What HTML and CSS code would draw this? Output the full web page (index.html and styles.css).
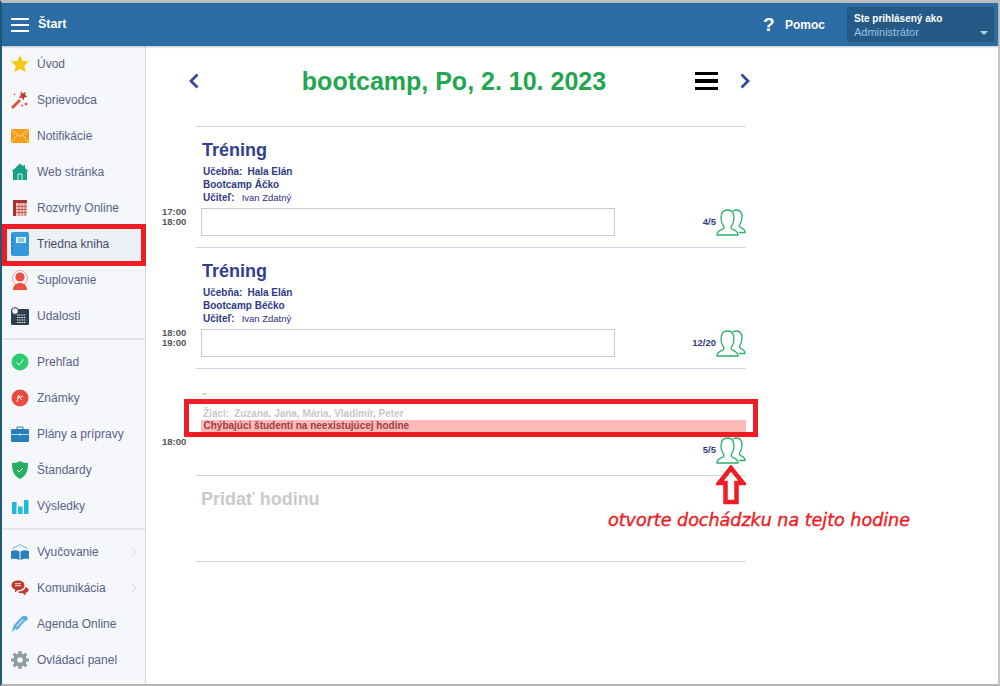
FILE: index.html
```html
<!DOCTYPE html>
<html lang="sk">
<head>
  <meta charset="UTF-8">
  <meta name="viewport" content="width=device-width, initial-scale=1">
  <title>Triedna kniha</title>
  <link rel="stylesheet" href="styles.css">
</head>
<body>
  <div class="window">
    <!-- Header -->
    <header class="topbar">
      <div class="menu-btn"><span></span><span></span><span></span></div>
      <div class="topbar-title">Štart</div>
      <div class="help"><span class="help-mark">?</span><span class="help-text">Pomoc</span></div>
      <div class="user-box">
        <div class="user-label">Ste prihlásený ako</div>
        <div class="user-name">Administrátor</div>
        <div class="user-caret"></div>
      </div>
    </header>

    <div class="layout">
      <!-- Sidebar -->
      <nav class="sidebar">
        <div class="nav-group">
          <div class="nav-item">
            <svg class="nav-icon" viewBox="0 0 18 18"><path fill="#f5c913" d="M9 0l2.600 6 6.400.6-4.800 4.200 1.400 6.400L9 13.900l-5.600 3.300 1.400-6.400L0 6.600 6.400 6z"/></svg>
            <span>Úvod</span>
          </div>
          <div class="nav-item">
            <svg class="nav-icon" viewBox="0 0 18 18"><path stroke="#e8483c" stroke-width="2.600" d="M1 17l8-8"/><path fill="#c0392b" d="M10 0l1.500 2.500L15 1l-.8 3 2.300 1.800-3 .5-1 3-1.800-2.500-3 .3 1.800-2.500z"/><path fill="#e8483c" d="M15 11l.7 1.300 1.300.7-1.300.7L15 15l-.7-1.300-1.300-.7 1.300-.7zM11 13l.5 1 1 .5-1 .5-.5 1-.5-1-1-.5 1-.5zM3.500 2l.4.900.9.400-.9.400-.4.900-.4-.9-.9-.4.900-.4z"/></svg>
            <span>Sprievodca</span>
          </div>
          <div class="nav-item">
            <svg class="nav-icon" viewBox="0 0 18 14"><rect width="18" height="14" fill="#f5a01b"/><path fill="none" stroke="#fbe3b5" stroke-width=".8" d="M0 .5l9 7 9-7M0 13.500l6.500-7.500M18 13.500L11.500 6"/></svg>
            <span>Notifikácie</span>
          </div>
          <div class="nav-item">
            <svg class="nav-icon" viewBox="0 0 18 18"><path fill="#16a085" d="M9 .5l3.500 3V2H14v3l3.500 3.500H16V17H2V8.500H.5z"/><path fill="none" stroke="#d5efe9" d="M7 17v-6h4v6"/></svg>
            <span>Web stránka</span>
          </div>
          <div class="nav-item">
            <svg class="nav-icon" viewBox="0 0 18 18"><rect x="2" y="1" width="14" height="16" fill="#f0c9c5"/><path fill="#a5362b" d="M2 1h14v3H2zM2 4h3v13H2z"/><path stroke="#c4574d" stroke-width=".9" d="M5 7.500h11M5 10.500h11M5 13.500h11M8 4v13M11 4v13M14 4v13"/></svg>
            <span>Rozvrhy Online</span>
          </div>
          <div class="nav-item nav-item-active">
            <svg class="nav-icon nav-icon-tall" viewBox="0 0 18 24"><rect width="18" height="24" rx="2" fill="#3498db"/><rect x="5" y="5" width="10" height="6" fill="#e3f1fb"/><path stroke="#3498db" d="M7 7h6M7 9h6"/><path stroke="#1f6fa8" d="M0 4h2M0 8h2M0 12h2M0 16h2M0 20h2"/></svg>
            <span>Triedna kniha</span>
          </div>
          <div class="nav-item">
            <svg class="nav-icon nav-icon-large" viewBox="0 0 18 20"><circle cx="9" cy="8" r="7.600" fill="none" stroke="#f0a79f"/><circle cx="9" cy="7" r="4.600" fill="#e8503f"/><path fill="#e8503f" d="M2 20c0-4.500 3-7 7-7s7 2.500 7 7z"/></svg>
            <span>Suplovanie</span>
          </div>
          <div class="nav-item">
            <svg class="nav-icon" viewBox="0 0 18 18"><rect y="2" width="18" height="16" rx="1" fill="#2c3e50"/><circle cx="4" cy="4" r="3.400" fill="#f4f6f9" stroke="#2c3e50"/><path stroke="#fff" stroke-width="1.200" stroke-dasharray="1.400 .8" d="M6 8h9M6 10.500h9M6 13h9M6 15.500h9"/></svg>
            <span>Udalosti</span>
          </div>
        </div>
        <div class="nav-group">
          <div class="nav-item">
            <svg class="nav-icon" viewBox="0 0 18 18"><circle cx="9" cy="9" r="8.500" fill="#2ecc71"/><path fill="none" stroke="#fff" d="M5.500 9.500l2.500 2.500 4.500-5.500"/></svg>
            <span>Prehľad</span>
          </div>
          <div class="nav-item">
            <svg class="nav-icon" viewBox="0 0 18 18"><circle cx="9" cy="9" r="8.500" fill="#e74c3c"/><path fill="none" stroke="#fff" stroke-width=".9" d="M6 13l1.500-7 3 5M7 9l5-2"/></svg>
            <span>Známky</span>
          </div>
          <div class="nav-item">
            <svg class="nav-icon" viewBox="0 0 18 16"><rect y="3" width="18" height="13" rx="1" fill="#2980b9"/><path fill="none" stroke="#2980b9" d="M6 3V1h6v2"/><path stroke="#d8eaf6" stroke-width=".8" d="M0 8.500h18"/><circle cx="9" cy="8.500" r="1" fill="#d8eaf6"/></svg>
            <span>Plány a prípravy</span>
          </div>
          <div class="nav-item">
            <svg class="nav-icon" viewBox="0 0 18 18"><path fill="#27ae60" d="M9 0c2.500 1.500 5 2 8 2 0 7-1 12.500-8 16C2 14.500 1 9 1 2c3 0 5.500-.5 8-2z"/><path fill="none" stroke="#fff" d="M6 9l2.200 2 3.800-4"/></svg>
            <span>Štandardy</span>
          </div>
          <div class="nav-item">
            <svg class="nav-icon" viewBox="0 0 18 18"><path fill="#1abbdc" d="M1 5h4.500v12H1zM7 9.500h4.500V17H7zM13 3h4.500v14H13z"/></svg>
            <span>Výsledky</span>
          </div>
        </div>
        <div class="nav-group">
          <div class="nav-item">
            <svg class="nav-icon" viewBox="0 0 18 16"><path fill="#2980b9" d="M0 7c3-1 6-1 8.500.5V16C6 14.500 3 14.500 0 15zM18 7c-3-1-6-1-8.500.5V16c2.500-1.500 5.500-1.500 8.500-1z"/><path fill="none" stroke="#7fb3d5" d="M1 5l8-4.500L17 5"/></svg>
            <span>Vyučovanie</span>
            <svg class="nav-more" viewBox="0 0 6 10"><path fill="none" stroke="#d3d7dc" d="M1 1l4 4-4 4"/></svg>
          </div>
          <div class="nav-item">
            <svg class="nav-icon" viewBox="0 0 18 17"><path fill="#c0392b" d="M7 1c3.800 0 6.500 1.800 6.500 4.700S10.800 10.500 7 10.500l-3 2.500v-3C1.500 9 .5 7.500.5 5.700.5 2.800 3.200 1 7 1z"/><path fill="#c0392b" d="M14.500 7.500c2 .5 3 1.500 3 3s-1 2.500-3 2.800V16l-3-2.500H8l-1-1.500c4 0 7-1.500 7.500-4.500z"/><path stroke="#fff" stroke-width=".9" d="M4 4.200h6M4 6.200h6"/></svg>
            <span>Komunikácia</span>
            <svg class="nav-more" viewBox="0 0 6 10"><path fill="none" stroke="#d3d7dc" d="M1 1l4 4-4 4"/></svg>
          </div>
          <div class="nav-item">
            <svg class="nav-icon" viewBox="0 0 18 18"><path fill="#5dade2" d="M0 18l3-8 8-8.500c2-1.500 6-.5 6 2.500L8 13.500z"/><path stroke="#f5f7fa" stroke-width="1.100" d="M5.500 11.500l6.500-7M9 12.500l5.500-6.500M0 18l5-4"/></svg>
            <span>Agenda Online</span>
          </div>
          <div class="nav-item">
            <svg class="nav-icon" viewBox="0 0 18 18"><circle cx="9" cy="9" r="4.800" fill="none" stroke="#8f9ea3" stroke-width="4"/><path stroke="#8f9ea3" stroke-width="3.200" d="M9 0v3.500M9 14.500V18M0 9h3.500M14.500 9H18M2.600 2.600l2.500 2.500M12.900 12.900l2.500 2.500M15.400 2.600l-2.500 2.500M5.100 12.900l-2.500 2.500"/></svg>
            <span>Ovládací panel</span>
          </div>
        </div>
      </nav>

      <!-- Content -->
      <main class="content">
        <div class="day-head">
          <svg class="day-arrow" viewBox="0 0 10 16"><path fill="none" stroke="#2f4c94" stroke-width="2.800" d="M8.500 1.500L2 8l6.500 6.500"/></svg>
          <h1 class="day-title">bootcamp, Po, 2. 10. 2023</h1>
          <div class="day-menu"><span></span><span></span><span></span></div>
          <svg class="day-arrow" viewBox="0 0 10 16"><path fill="none" stroke="#2f4c94" stroke-width="2.800" d="M1.500 1.500L8 8l-6.500 6.500"/></svg>
        </div>

        <section class="lesson">
          <div class="lesson-time">17:00<br>18:00</div>
          <div class="lesson-body">
            <h2 class="lesson-title">Tréning</h2>
            <div class="lesson-info">
              <div><span class="info-label">Učebňa:</span>Hala Elán</div>
              <div>Bootcamp Áčko</div>
              <div><span class="info-label">Učiteľ:</span><span class="info-thin">Ivan Zdatný</span></div>
            </div>
            <div class="lesson-foot">
              <div class="lesson-note"></div>
              <div class="lesson-count">4/5</div>
              <svg class="people" viewBox="0 0 30 27"><use href="#people-icon"/></svg>
            </div>
          </div>
        </section>

        <section class="lesson">
          <div class="lesson-time">18:00<br>19:00</div>
          <div class="lesson-body">
            <h2 class="lesson-title">Tréning</h2>
            <div class="lesson-info">
              <div><span class="info-label">Učebňa:</span>Hala Elán</div>
              <div>Bootcamp Béčko</div>
              <div><span class="info-label">Učiteľ:</span><span class="info-thin">Ivan Zdatný</span></div>
            </div>
            <div class="lesson-foot">
              <div class="lesson-note"></div>
              <div class="lesson-count">12/20</div>
              <svg class="people" viewBox="0 0 30 27"><use href="#people-icon"/></svg>
            </div>
          </div>
        </section>

        <section class="lesson lesson-ghost">
          <div class="lesson-time">18:00</div>
          <div class="lesson-body">
            <div class="ghost-dash">-</div>
            <div class="ghost-students"><span class="info-label">Žiaci:</span>Zuzana, Jana, Mária, Vladimír, Peter</div>
            <div class="ghost-warning">Chýbajúci študenti na neexistujúcej hodine</div>
            <div class="ghost-foot">
              <div class="lesson-count">5/5</div>
              <svg class="people" viewBox="0 0 30 27"><use href="#people-icon"/></svg>
            </div>
          </div>
        </section>

        <section class="lesson lesson-add">
          <div class="lesson-time"></div>
          <div class="lesson-body">Pridať hodinu</div>
        </section>
      </main>
    </div>

    <!-- Annotations -->
    <div class="mark mark-nav"></div>
    <div class="mark mark-row"></div>
    <svg class="mark-arrow" viewBox="0 0 30 40"><path fill="none" stroke="#ee1c25" stroke-width="4.500" d="M15 3L3 18h6.500v19h11V18H27z"/></svg>
    <div class="mark-text">otvorte dochádzku na tejto hodine</div>
  </div>

  <svg class="defs" width="0" height="0">
    <symbol id="people-icon" viewBox="0 0 30 27">
      <path fill="none" stroke="#2bb06a" stroke-width="1.300" d="M1 26c0-4 3-4.500 6-6 1.500-1 1-2.500 0-4-1.500-2-2-4-2-7 0-5 2.500-8 6.500-8s6.500 3 6.500 8c0 3-.5 5-2 7-1 1.500-1.500 3 0 4 3 1.500 6 2 6 6z"/>
      <path fill="none" stroke="#2bb06a" stroke-width="1.300" d="M17 2c1-.7 2-1 3.500-1 3.500 0 5.500 2.500 5.500 7 0 3-.5 5-2 7-1 1.500-1 2.500.5 3.500 2 1 4.500 1.500 4.500 5h-6"/>
    </symbol>
  </svg>
</body>
</html>
```

FILE: styles.css
```css
* {
  margin: 0;
  padding: 0;
  box-sizing: border-box;
}

html, body {
  height: 100%;
  overflow: hidden;
  font-family: 'Liberation Sans', Arial, sans-serif;
  background: #fff;
}

.window {
  position: relative;
  height: 686px;
  border-top: 3px solid #bdbdbd;
  border-left: 2px solid #1f5a78;
  border-right: 2px solid #c4c4c4;
  border-bottom: 2px solid #b4b4b4;
  display: flex;
  flex-direction: column;
}

/* === HEADER === */
.topbar {
  height: 43px;
  flex-shrink: 0;
  background: #2a6ca3;
  color: #fff;
  display: flex;
  align-items: center;
  box-shadow: 0 1px 2px rgba(0, 0, 0, 0.25);
  position: relative;
  z-index: 2;
}

.menu-btn {
  width: 18px;
  margin-left: 9px;
  display: flex;
  flex-direction: column;
  gap: 4px;
}

.menu-btn span {
  height: 2px;
  background: #fff;
}

.topbar-title {
  margin: 0 0 1px 9px;
  font-size: 12.500px;
  font-weight: 700;
  flex: 1;
}

.help {
  display: flex;
  align-items: center;
  font-weight: 700;
  margin-right: 22px;
}

.help-mark {
  font-size: 19px;
  width: 22px;
}

.help-text {
  margin-left: 0;
  font-size: 12px;
}

.user-box {
  width: 147px;
  height: 35px;
  margin-right: 4px;
  padding: 4px 6px;
  position: relative;
  background: #245a85;
  border: 1px solid #23557c;
  border-radius: 2px;
  font-size: 10px;
}

.user-label {
  font-weight: 700;
  line-height: 13px;
}

.user-name {
  color: #9cc0e2;
  line-height: 15px;
  font-size: 11px;
}

.user-caret {
  position: absolute;
  right: 5px;
  bottom: 6px;
  border-left: 4px solid transparent;
  border-right: 4px solid transparent;
  border-top: 4px solid #b8cfe4;
}

/* === SIDEBAR === */
.layout {
  flex: 1;
  display: flex;
  min-height: 0;
}

.sidebar {
  width: 144px;
  flex-shrink: 0;
  background: #f5f7fa;
  border-right: 1px solid #d5d8dc;
}

.nav-group {
  padding: 0 0 4px;
  border-bottom: 2px solid #e2e5e9;
  margin-bottom: 4px;
}

.nav-group:last-child {
  border-bottom: 0;
}

.nav-item {
  height: 36px;
  display: flex;
  align-items: center;
  padding-left: 9px;
  font-size: 12px;
  color: #5c5f8a;
}

.nav-item-active {
  background: #edf0f5;
  color: #4a4a6a;
}

.nav-icon {
  width: 18px;
  height: 18px;
  margin-right: 8px;
  flex-shrink: 0;
  overflow: visible;
}

.nav-icon-tall {
  height: 24px;
}

.nav-icon-large {
  height: 20px;
}

.nav-more {
  width: 6px;
  height: 10px;
  margin-left: auto;
  margin-right: 8px;
}

/* === CONTENT === */
.content {
  flex: 1;
  padding-left: 16px;
  min-width: 0;
}

.day-head {
  width: 588px;
  height: 80px;
  display: flex;
  align-items: center;
  padding: 0 0 10px 27px;
}

.day-arrow {
  width: 10px;
  height: 16px;
  flex-shrink: 0;
}

.day-title {
  flex: 1;
  padding-left: 14px;
  text-align: center;
  font-size: 25px;
  font-weight: 700;
  color: #22a64f;
}

.day-menu {
  width: 23px;
  margin-right: 22px;
  display: flex;
  flex-direction: column;
  gap: 4px;
}

.day-menu span {
  height: 3.500px;
  background: #000;
}

.lesson {
  width: 584px;
  display: flex;
}

.lesson-time {
  width: 34px;
  padding-right: 11px;
  flex-shrink: 0;
  align-self: flex-end;
  text-align: right;
  font-size: 9.500px;
  font-weight: 700;
  line-height: 10px;
  color: #555;
  margin-bottom: 20px;
  white-space: nowrap;
}

.lesson-body {
  flex: 1;
  border-top: 1px solid #c9d6e4;
  padding: 12px 0 11px;
}

.lesson-title {
  font-size: 18px;
  line-height: 23px;
  color: #2f3f93;
  margin-left: 6px;
}

.lesson-info {
  margin: 3px 0 4px 7px;
  font-size: 10px;
  font-weight: 700;
  line-height: 13px;
  color: #2f3a85;
}

.info-label {
  margin-right: 5px;
}

.info-thin {
  font-size: 9.500px;
  font-weight: 400;
  color: #2d2d80;
  margin-left: 2px;
}

.lesson-foot {
  display: flex;
  align-items: flex-end;
  margin-left: 5px;
}

.lesson-note {
  width: 414px;
  height: 28px;
  border: 1px solid #ccc;
  background: #fff;
}

.lesson-count {
  margin-left: auto;
  margin-bottom: 9px;
  font-size: 9.500px;
  font-weight: 700;
  color: #2f3a85;
}

.people {
  width: 30px;
  height: 27px;
  flex-shrink: 0;
}

.lesson-ghost .lesson-body {
  padding: 18px 0 11px;
  min-height: 107px;
}

.lesson-ghost .lesson-time {
  margin-bottom: 28px;
}

.ghost-dash {
  margin-left: 6px;
  font-size: 14px;
  font-weight: 700;
  line-height: 12px;
  color: #c4c4c4;
}

.ghost-students {
  margin: 8px 0 0 7px;
  font-size: 10px;
  font-weight: 700;
  line-height: 13px;
  color: #c8c8c8;
}

.ghost-warning {
  margin-left: 5px;
  padding-left: 2.500px;
  height: 12px;
  background: #ffb9b9;
  font-size: 10px;
  font-weight: 700;
  line-height: 12px;
  color: #9d3d3d;
}

.ghost-foot {
  display: flex;
  align-items: flex-end;
  justify-content: flex-end;
  margin-top: 5px;
}

.lesson-add .lesson-body {
  border-bottom: 1px solid #c9d6e4;
  height: 87px;
  padding: 13px 0 0 5px;
  font-size: 18px;
  font-weight: 700;
  color: #c9c9c9;
}

/* === ANNOTATIONS === */
.mark {
  position: absolute;
  border: 5px solid #ee1c25;
  pointer-events: none;
}

.mark-nav {
  left: 0;
  top: 221px;
  width: 144px;
  height: 42px;
}

.mark-row {
  left: 182px;
  top: 396px;
  width: 574px;
  height: 38px;
}

.mark-arrow {
  position: absolute;
  left: 714px;
  top: 462px;
  width: 30px;
  height: 40px;
}

.mark-text {
  position: absolute;
  left: 606px;
  top: 507px;
  font-family: 'DejaVu Sans', sans-serif;
  font-style: italic;
  font-size: 17.500px;
  line-height: 20px;
  color: #ee1c25;
  -webkit-text-stroke: 0.4px #ee1c25;
  white-space: nowrap;
}

.defs {
  position: absolute;
}
```
